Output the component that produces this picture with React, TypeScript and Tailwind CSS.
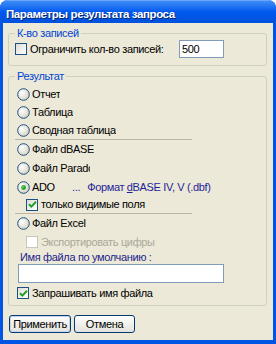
import React from 'react';

const font = "font-['Liberation_Sans',Arial,sans-serif]";

function Radio({ label, checked = false, clip }: { label: string; checked?: boolean; clip?: string }) {
  return (
    <div className="flex items-center">
      <svg width="13" height="13" viewBox="0 0 13 13" className="shrink-0">
        <defs>
          <radialGradient id="rg" cx="0.35" cy="0.35" r="0.7">
            <stop offset="0" stopColor="#ffffff" />
            <stop offset="1" stopColor="#d6d3c4" />
          </radialGradient>
          <radialGradient id="dot" cx="0.35" cy="0.35" r="0.7">
            <stop offset="0" stopColor="#5fd35f" />
            <stop offset="1" stopColor="#158a15" />
          </radialGradient>
        </defs>
        <circle cx="6.5" cy="6.5" r="5.8" fill="url(#rg)" stroke="#1c5180" strokeWidth="1" />
        {checked && <circle cx="6.5" cy="6.5" r="2.4" fill="url(#dot)" />}
      </svg>
      <span className={`ml-[2px] whitespace-nowrap overflow-hidden ${clip ?? ''}`}>{label}</span>
    </div>
  );
}

function Check({ label, checked = false, disabled = false }: { label: string; checked?: boolean; disabled?: boolean }) {
  return (
    <div className="flex items-center">
      <span
        className={`w-[12px] h-[12px] shrink-0 border flex items-center justify-center ${
          disabled ? 'border-[#c9c7ba] bg-white' : 'border-[#1c5180] bg-gradient-to-br from-[#dcdcd7] to-white'
        }`}
      >
        {checked && (
          <svg width="9" height="9" viewBox="0 0 9 9">
            <path d="M1 4.2 L3.4 6.6 L8 1.8" fill="none" stroke="#21a121" strokeWidth="2" />
          </svg>
        )}
      </span>
      <span className={`ml-[3px] whitespace-nowrap ${disabled ? 'text-[#aca899]' : ''}`}>{label}</span>
    </div>
  );
}

function Sep() {
  return <div className="h-px w-[177px] bg-[#b9b7a8]" />;
}

export default function App() {
  return (
    <div className={`w-[276px] h-[344px] flex flex-col bg-[#0055e5] rounded-t-[8px] overflow-hidden ${font} text-[11px] tracking-[-0.35px] text-black`}>
      <div className="h-[23px] shrink-0 flex items-center pl-[6px] pt-[5px] bg-gradient-to-b from-[#3d8cf7] via-[#0058ee] to-[#0052dd] border-t border-[#6aa5ff]">
        <span className="text-white font-bold text-[11.5px] tracking-[-0.4px] [text-shadow:1px_1px_0_#0a246a]">
          Параметры результата запроса
        </span>
      </div>
      <div className="flex-1 mx-[3px] mb-[4px] bg-[#ece9d8] pl-[5px] pr-[6px] flex flex-col">
        <fieldset className="mt-[4px] border border-[#d0d0bf] rounded-[3px] px-[6px] pb-[7px] m-0 min-w-0">
          <legend className="px-[2px] leading-[13px] text-[#0046d5]">К-во записей</legend>
          <div className="h-[18px] flex items-center">
            <div className="w-[164px]">
              <Check label="Ограничить кол-во записей:" />
            </div>
            <div className="w-[45px] h-[18px] border border-[#7f9db9] bg-white flex items-center pl-[2px]">500</div>
          </div>
        </fieldset>

        <fieldset className="mt-[4px] border border-[#d0d0bf] rounded-[3px] px-[6px] pb-[2px] m-0 min-w-0">
          <legend className="px-[2px] leading-[13px] text-[#0046d5]">Результат</legend>
          <div className="pt-[2px] flex flex-col">
            <div className="h-[18px] flex items-center ml-[2px]"><Radio label="Отчет" /></div>
            <div className="h-[18px] flex items-center ml-[2px]"><Radio label="Таблица" /></div>
            <div className="h-[18px] flex items-center ml-[2px]"><Radio label="Сводная таблица" /></div>
            <Sep />
            <div className="h-[18px] flex items-center ml-[2px]"><Radio label="Файл dBASE" /></div>
            <div className="h-[20px] flex items-center ml-[2px]"><Radio label="Файл Paradox" clip="w-[58px]" /></div>
            <div className="h-[19px] flex items-center ml-[2px]">
              <div className="w-[55px]"><Radio label="ADO" checked /></div>
              <span className="text-[#1f1f9a]">...</span>
              <span className="ml-[7px] text-[#1f1f9a]">
                Формат <span className="underline">d</span>BASE IV, V (.dbf)
              </span>
            </div>
            <div className="h-[15px] flex items-center ml-[11px]"><Check label="только видимые поля" checked /></div>
            <div className="mt-[1px]"><Sep /></div>
            <div className="h-[19px] flex items-center ml-[2px]"><Radio label="Файл Excel" /></div>
            <div className="h-[18px] flex items-center ml-[11px]"><Check label="Экспортировать цифры" disabled /></div>
            <div className="h-[13px] flex items-center ml-[5px] text-[#1e1e8c]">Имя файла по умолчанию :</div>
            <div className="h-[19px] w-[206px] ml-[3px] border border-[#7f9db9] bg-white" />
            <div className="h-[20px] flex items-center ml-[2px]"><Check label="Запрашивать имя файла" checked /></div>
          </div>
        </fieldset>

        <div className="mt-[9px] ml-[1px] flex gap-[3px]">
          <button className="w-[62px] h-[18px] border border-[#003c74] rounded-[3px] bg-gradient-to-b from-white to-[#e3e2da] shadow-[inset_0_0_0_1px_#c5d5f2] flex items-center justify-center p-0">
            Применить
          </button>
          <button className="w-[61px] h-[18px] border border-[#003c74] rounded-[3px] bg-gradient-to-b from-white to-[#e3e2da] flex items-center justify-center p-0">
            Отмена
          </button>
        </div>
      </div>
    </div>
  );
}
